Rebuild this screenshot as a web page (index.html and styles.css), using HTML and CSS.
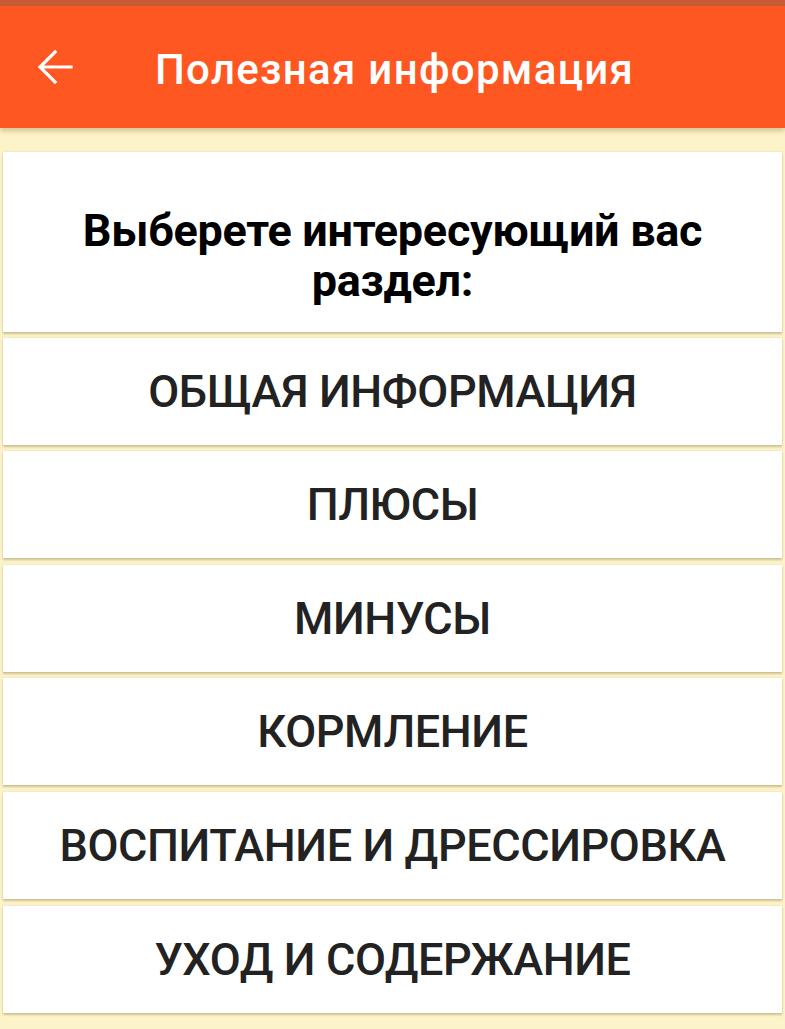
FILE: index.html
```html
<!DOCTYPE html>
<html lang="ru">
<head>
<meta charset="utf-8">
<link rel="stylesheet" href="styles.css">
</head>
<body>
<div class="status"></div>
<header class="appbar">
  <svg class="back" width="36" height="36" viewBox="0 0 36 36"><path d="M34 18H4M18 3L3 18l15 15" fill="none" stroke="#fff" stroke-width="3.2" stroke-linecap="square"/></svg>
  <h1 class="title">Полезная информация</h1>
</header>
<main class="content">
  <div class="card intro"><p>Выберете интересующий вас<br>раздел:</p></div>
  <button class="btn">ОБЩАЯ ИНФОРМАЦИЯ</button>
  <button class="btn">ПЛЮСЫ</button>
  <button class="btn">МИНУСЫ</button>
  <button class="btn">КОРМЛЕНИЕ</button>
  <button class="btn">ВОСПИТАНИЕ И ДРЕССИРОВКА</button>
  <button class="btn">УХОД И СОДЕРЖАНИЕ</button>
</main>
</body>
</html>
```
FILE: styles.css
```css
html, body { margin: 0; padding: 0; }
body {
  background: #fdf3c9;
  font-family: Roboto, "Noto Sans", sans-serif;
  width: 785px;
  height: 1029px;
  overflow: hidden;
}
.status { height: 6px; background: #c95b39; }
.appbar {
  height: 122px;
  background: #ff5722;
  display: flex;
  align-items: center;
  box-shadow: 0 3px 5px rgba(120, 80, 20, 0.3);
  position: relative;
  z-index: 1;
}
.back { margin-left: 37px; margin-top: 0; }
.title {
  margin: 5px 0 0 82px;
  color: #fff;
  font-weight: 500;
  font-size: 42px;
  letter-spacing: 1.3px;
}
.content {
  padding: 24px 3px 0;
  display: flex;
  flex-direction: column;
  gap: 6.6px;
}
.card, .btn {
  background: #fff;
  box-shadow: 0 2px 2px rgba(110, 90, 30, 0.3), 0 0 2px rgba(110, 90, 30, 0.15);
}
.intro {
  height: 180px;
  display: flex;
  align-items: center;
  justify-content: center;
  margin-bottom: -1px;
}
.intro p {
  margin: 28px 0 0;
  text-align: center;
  font-weight: 700;
  font-size: 45px;
  line-height: 50px;
  letter-spacing: -0.3px;
  color: #000;
}
.btn {
  border: 0;
  height: 107px;
  width: 100%;
  font-family: Roboto, "Noto Sans", sans-serif;
  font-weight: 500;
  font-size: 45px;
  letter-spacing: -0.4px;
  color: #222;
  padding: 0;
}
```
